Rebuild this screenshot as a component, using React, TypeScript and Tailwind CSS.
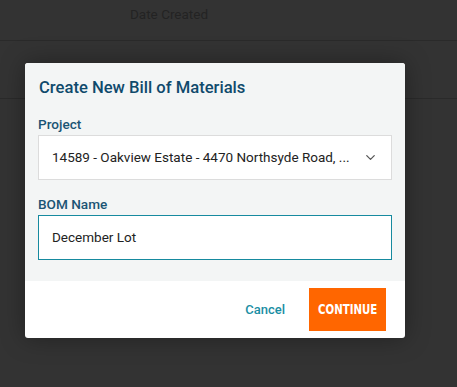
import { ChevronDown } from "lucide-react";

function BackgroundTable() {
  return (
    <div className="h-full w-full bg-[#333333] font-['Roboto',sans-serif]">
      <div className="h-[41px] border-b border-[#2a2a2a] pl-[130px] pt-[5px] text-[13.5px] leading-[18px] text-[#232323]">
        Date Created
      </div>
      <div className="h-[58px] border-b border-[#2a2a2a]" />
      <div className="h-[58px]" />
    </div>
  );
}

function BomModal() {
  return (
    <div className="absolute left-[25px] top-[63px] w-[380px] overflow-hidden rounded-[3px] bg-white font-['Roboto',sans-serif] shadow-[0_0_24px_rgba(0,0,0,0.35)]">
      <div className="bg-[#f3f5f5] px-[13px] pb-[21px] pt-[15px]">
        <h2 className="pl-px text-[16.6px] font-medium leading-[20px] text-[#0f4a6c]">
          Create New Bill of Materials
        </h2>
        <label className="mt-[19px] block text-[13.6px] font-medium leading-[14px] text-[#1b5474]">
          Project
        </label>
        <div className="mt-[4px] flex h-[45px] items-center justify-between border border-[#dcdcdc] bg-white pl-[13px] pr-[13px]">
          <span className="text-[13.5px] text-[#222]">
            14589 - Oakview Estate - 4470 Northsyde Road, ...
          </span>
          <ChevronDown size={15} strokeWidth={2} className="text-[#555]" />
        </div>
        <label className="mt-[17px] block text-[13.6px] font-medium leading-[14px] text-[#1b5474]">
          BOM Name
        </label>
        <div className="mt-[4px] flex h-[45px] items-center border border-[#168a9f] bg-white pl-[13px]">
          <span className="text-[13.5px] text-[#222]">December Lot</span>
        </div>
      </div>
      <div className="flex h-[57px] items-center justify-end gap-[24px] pr-[19px]">
        <button className="text-[13px] font-medium text-[#1a8ea4]">Cancel</button>
        <button className="flex h-[43px] w-[77px] items-center justify-center bg-[#ff6600]">
          <span className="inline-block scale-x-[0.73] font-['DejaVu_Sans',sans-serif] text-[14px] font-bold text-white">
            CONTINUE
          </span>
        </button>
      </div>
    </div>
  );
}

export default function App() {
  return (
    <div className="relative h-[387px] w-[457px] overflow-hidden">
      <BackgroundTable />
      <BomModal />
    </div>
  );
}
